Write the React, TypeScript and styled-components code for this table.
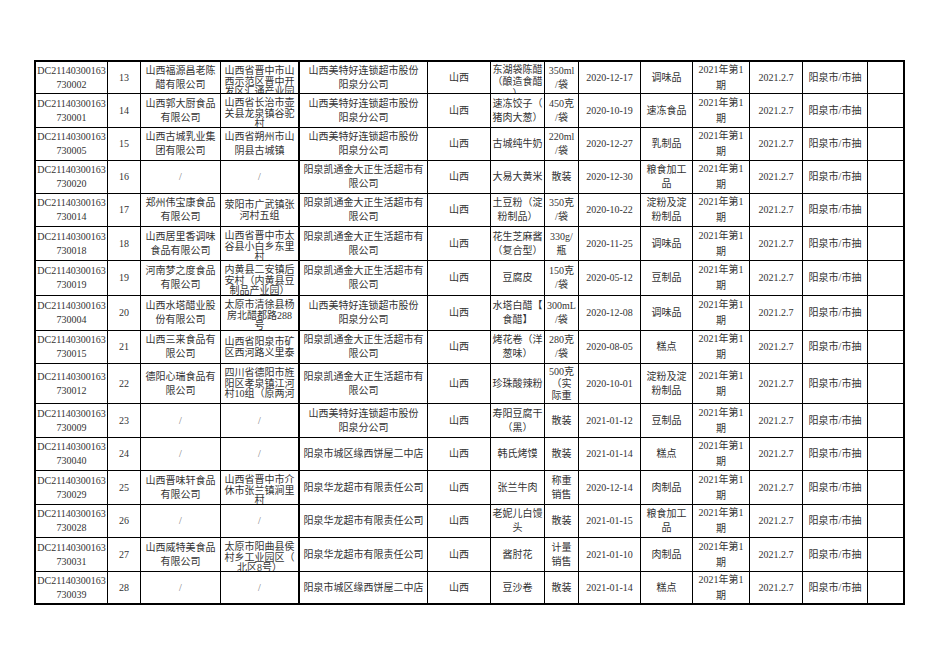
import React from "react";
import styled, { createGlobalStyle } from "styled-components";

const GlobalStyle = createGlobalStyle`
  html, body {
    margin: 0;
    padding: 0;
    background: #fff;
  }
  body {
    font-family: "Liberation Serif", "Noto Sans CJK SC", serif;
    color: #333;
  }
`;

const Page = styled.div`
  padding: 60px 0 0 34px;
`;

// column widths (px), address column carries the thick 2px rule
const COLS = [72, 33, 80, 79, 128, 63, 54, 34, 62, 52, 57, 53, 65, 35];
const ROWS = [32, 34, 33, 33, 33, 34, 35, 35, 33, 40, 34, 33, 34, 33, 34, 31];

const Sheet = styled.div`
  display: grid;
  grid-template-columns: ${COLS.map((w) => `${w}px`).join(" ")};
  grid-template-rows: ${ROWS.map((h) => `${h}px`).join(" ")};
  width: 871px;
  box-sizing: border-box;
  border: 2px solid #000;
`;

const Cell = styled.div<{
  $col: number;
  $lastRow: boolean;
  $lh: number;
  $top?: number;
  $muted?: boolean;
}>`
  box-sizing: border-box;
  display: flex;
  align-items: ${(p) => (p.$top !== undefined ? "flex-start" : "center")};
  justify-content: center;
  overflow: hidden;
  padding: ${(p) => (p.$top !== undefined ? `${p.$top}px 1px 0` : "0 1px")};
  border-right: ${(p) =>
    p.$col === COLS.length - 1 ? "none" : p.$col === 3 ? "2px solid #000" : "1px solid #000"};
  border-bottom: ${(p) => (p.$lastRow ? "none" : "1px solid #000")};
  font-family: "Liberation Serif", "Noto Sans CJK SC", serif;
  font-size: 10px;
  line-height: ${(p) => p.$lh}px;
  white-space: pre;
  text-align: center;
  color: ${(p) => (p.$muted ? "#777" : "#333")};
`;

type Row = {
  id: string;
  no: number;
  maker: string;
  addr: string;
  addrTight?: boolean;
  seller: string;
  product: string;
  spec: string;
  made: string;
  kind: string;
};

const MTH = "山西美特好连锁超市股份\n阳泉分公司";
const KT = "阳泉凯通金大正生活超市有\n限公司";
const HL = "阳泉华龙超市有限责任公司";
const XB = "阳泉市城区缘西饼屋二中店";

const rows: Row[] = [
  { id: "730002", no: 13, maker: "山西福源昌老陈\n醋有限公司", addr: "山西省晋中市山\n西示范区晋中开\n发区汇通产业园", addrTight: true, seller: MTH, product: "东湖袋陈醋\n（酿造食醋\n）", spec: "350ml\n/袋", made: "2020-12-17", kind: "调味品" },
  { id: "730001", no: 14, maker: "山西郭大厨食品\n有限公司", addr: "山西省长治市壶\n关县龙泉镇谷驼\n村", addrTight: true, seller: MTH, product: "速冻饺子（\n猪肉大葱）", spec: "450克\n/袋", made: "2020-10-19", kind: "速冻食品" },
  { id: "730005", no: 15, maker: "山西古城乳业集\n团有限公司", addr: "山西省朔州市山\n阴县古城镇", seller: MTH, product: "古城纯牛奶", spec: "220ml\n/袋", made: "2020-12-27", kind: "乳制品" },
  { id: "730020", no: 16, maker: "/", addr: "/", seller: KT, product: "大易大黄米", spec: "散装", made: "2020-12-30", kind: "粮食加工\n品" },
  { id: "730014", no: 17, maker: "郑州伟宝康食品\n有限公司", addr: "荥阳市广武镇张\n河村五组", addrTight: true, seller: KT, product: "土豆粉（淀\n粉制品）", spec: "350克\n/袋", made: "2020-10-22", kind: "淀粉及淀\n粉制品" },
  { id: "730018", no: 18, maker: "山西居里香调味\n食品有限公司", addr: "山西省晋中市太\n谷县小白乡东里\n村", addrTight: true, seller: KT, product: "花生芝麻酱\n（复合型）", spec: "330g/\n瓶", made: "2020-11-25", kind: "调味品" },
  { id: "730019", no: 19, maker: "河南梦之度食品\n有限公司", addr: "内黄县二安镇后\n安村（内黄县豆\n制品产业园）", addrTight: true, seller: KT, product: "豆腐皮", spec: "150克\n/袋", made: "2020-05-12", kind: "豆制品" },
  { id: "730004", no: 20, maker: "山西水塔醋业股\n份有限公司", addr: "太原市清徐县杨\n房北醋都路288\n号", addrTight: true, seller: MTH, product: "水塔白醋【\n食醋】", spec: "300mL\n/袋", made: "2020-12-08", kind: "调味品" },
  { id: "730015", no: 21, maker: "山西三来食品有\n限公司", addr: "山西省阳泉市矿\n区西河路义里泰", addrTight: true, seller: KT, product: "烤花卷（洋\n葱味）", spec: "280克\n/袋", made: "2020-08-05", kind: "糕点" },
  { id: "730012", no: 22, maker: "德阳心瑞食品有\n限公司", addr: "四川省德阳市旌\n阳区孝泉镇江河\n村10组（原两河", addrTight: true, seller: KT, product: "珍珠酸辣粉", spec: "500克\n（实\n际重", made: "2020-10-01", kind: "淀粉及淀\n粉制品" },
  { id: "730009", no: 23, maker: "/", addr: "/", seller: MTH, product: "寿阳豆腐干\n（黑）", spec: "散装", made: "2021-01-12", kind: "豆制品" },
  { id: "730040", no: 24, maker: "/", addr: "/", seller: XB, product: "韩氏烤馍", spec: "散装", made: "2021-01-14", kind: "糕点" },
  { id: "730029", no: 25, maker: "山西晋味轩食品\n有限公司", addr: "山西省晋中市介\n休市张兰镇涧里\n村", addrTight: true, seller: HL, product: "张兰牛肉", spec: "称重\n销售", made: "2020-12-14", kind: "肉制品" },
  { id: "730028", no: 26, maker: "/", addr: "/", seller: HL, product: "老妮儿白馒\n头", spec: "散装", made: "2021-01-15", kind: "粮食加工\n品" },
  { id: "730031", no: 27, maker: "山西威特美食品\n有限公司", addr: "太原市阳曲县侯\n村乡工业园区（\n北区8号）", addrTight: true, seller: HL, product: "酱肘花", spec: "计量\n销售", made: "2021-01-10", kind: "肉制品" },
  { id: "730039", no: 28, maker: "/", addr: "/", seller: XB, product: "豆沙卷", spec: "散装", made: "2021-01-14", kind: "糕点" },
];

// line pitch and top offset for a cell, following how the sheet squeezes long text
const layout = (text: string, col: number, tight?: boolean) => {
  const lines = text.split("\n").length;
  if (col === 10) return { lh: 16 };
  if (tight) return lines >= 3 ? { lh: 10.5, top: 4 } : { lh: 11.5 };
  if (lines >= 3) return { lh: 12, top: 2 };
  return { lh: 14 };
};

export default function App() {
  return (
    <>
      <GlobalStyle />
      <Page>
        <Sheet>
          {rows.map((r, ri) => {
            const last = ri === rows.length - 1;
            const values = [
              `DC21140300163\n${r.id}`,
              String(r.no),
              r.maker,
              r.addr,
              r.seller,
              "山西",
              r.product,
              r.spec,
              r.made,
              r.kind,
              "2021年第1\n期",
              "2021.2.7",
              "阳泉市/市抽",
              "",
            ];
            return values.map((v, ci) => {
              const l = layout(v, ci, ci === 3 && r.addrTight);
              return (
                <Cell
                  key={`${r.no}-${ci}`}
                  $col={ci}
                  $lastRow={last}
                  $lh={l.lh}
                  $top={l.top}
                  $muted={v === "/"}
                >
                  {v}
                </Cell>
              );
            });
          })}
        </Sheet>
      </Page>
    </>
  );
}
